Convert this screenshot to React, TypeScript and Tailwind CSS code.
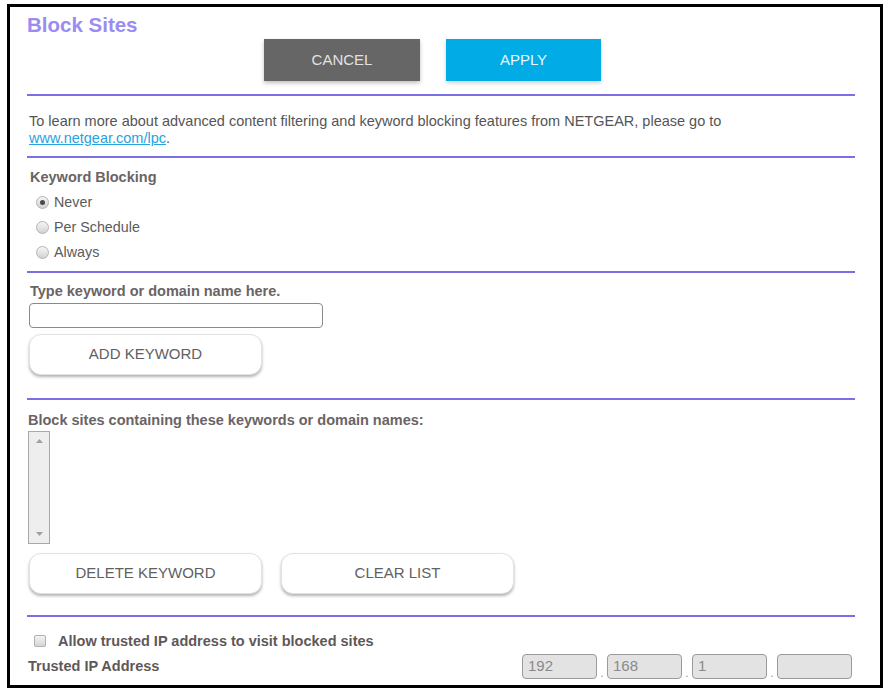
import { useState } from "react";

const LINE = "h-[2px] bg-[#7b6fe3]";

function Radio({ checked, label }: { checked?: boolean; label: string }) {
  return (
    <label className="flex h-[25px] items-center gap-[5px] pl-[9px] text-[14.3px] text-[#5b5b5b]">
      <span className="flex h-[13px] w-[13px] items-center justify-center rounded-full border border-[#b4b4b4] bg-gradient-to-b from-[#f6f6f6] to-[#d2d2d2]">
        {checked && <span className="h-[5px] w-[5px] rounded-full bg-[#4a4a4a]" />}
      </span>
      {label}
    </label>
  );
}

function PillButton({ children }: { children: string }) {
  return (
    <button className="h-[41px] w-[233px] rounded-[12px] border border-[#e2e2e2] bg-white text-[15px] text-[#616161] shadow-[0_2px_3px_rgba(0,0,0,0.3)]">
      {children}
    </button>
  );
}

function IpBox({ value }: { value: string }) {
  return (
    <div className="flex h-[25px] w-[75px] items-center rounded-[4px] border border-[#9a9a9a] bg-[#e3e3e3] pl-[5px] text-[15px] text-[#8a8a8a]">
      {value}
    </div>
  );
}

export default function App() {
  const [mode, setMode] = useState("never");

  return (
    <div className="h-[690px] w-[887px] bg-white pl-[7px] pt-[4px] font-['Liberation_Sans',Arial,sans-serif]">
      <div className="h-[684px] w-[876px] border-[3px] border-black pl-[17px] pr-[25px]">
        <h1 className="mt-[6px] text-[20.5px] leading-[24px] font-bold text-[#9a8cf2]">Block Sites</h1>

        <div className="mt-[2px] flex gap-[26px] pl-[237px]">
          <button className="h-[42px] w-[156px] bg-[#666666] text-[15px] text-[#e2e2e2] shadow-[0_2px_4px_rgba(0,0,0,0.25)]">
            CANCEL
          </button>
          <button className="h-[42px] w-[155px] bg-[#00abe6] text-[15px] text-[#e9f7fd] shadow-[0_2px_4px_rgba(0,0,0,0.2)]">
            APPLY
          </button>
        </div>

        <div className={`mt-[13px] ${LINE}`} />

        <p className="mt-[17px] pl-[2px] text-[14.5px] leading-[17px] text-[#555]">
          To learn more about advanced content filtering and keyword blocking features from NETGEAR, please go to
          <br />
          <a className="text-[#27a3dd] underline">www.netgear.com/lpc</a>.
        </p>

        <div className={`mt-[9px] ${LINE}`} />

        <div className="mt-[10px] pl-[3px] text-[14.5px] leading-[18px] font-bold text-[#6b6464]">Keyword Blocking</div>
        <div className="mt-[4px]" onClick={() => setMode(mode)}>
          <Radio checked={mode === "never"} label="Never" />
          <Radio checked={mode === "schedule"} label="Per Schedule" />
          <Radio checked={mode === "always"} label="Always" />
        </div>

        <div className={`mt-[6px] ${LINE}`} />

        <div className="mt-[9px] pl-[3px] text-[14.5px] leading-[18px] font-bold text-[#6b6464]">
          Type keyword or domain name here.
        </div>
        <input
          type="text"
          className="mt-[3px] ml-[2px] h-[25px] w-[294px] rounded-[4px] border border-[#8a8a8a] bg-white px-1 text-[14px] outline-none"
        />
        <div className="mt-[6px] pl-[2px]">
          <PillButton>ADD KEYWORD</PillButton>
        </div>

        <div className={`mt-[23px] ${LINE}`} />

        <div className="mt-[11px] pl-[1px] text-[14.5px] leading-[18px] font-bold text-[#6b6464]">
          Block sites containing these keywords or domain names:
        </div>
        <div className="mt-[2px] ml-[1px] flex h-[113px] w-[22px] flex-col items-center justify-between border border-[#a8a8a8] bg-[#eeeeee] py-[7px]">
          <svg width="7" height="4" viewBox="0 0 7 4">
            <path d="M0 4 L3.5 0 L7 4 Z" fill="#a0a0a0" />
          </svg>
          <svg width="7" height="4" viewBox="0 0 7 4">
            <path d="M0 0 L7 0 L3.5 4 Z" fill="#a0a0a0" />
          </svg>
        </div>
        <div className="mt-[9px] flex gap-[19px] pl-[2px]">
          <PillButton>DELETE KEYWORD</PillButton>
          <PillButton>CLEAR LIST</PillButton>
        </div>

        <div className={`mt-[21px] ${LINE}`} />

        <label className="mt-[15px] flex items-center gap-[12px] pl-[7px] text-[14.5px] leading-[18px] font-bold text-[#5f5858]">
          <span className="h-[12px] w-[12px] rounded-[2px] border border-[#b0b0b0] bg-gradient-to-b from-[#f4f4f4] to-[#d6d6d6]" />
          Allow trusted IP address to visit blocked sites
        </label>

        <div className="mt-[4px] flex h-[25px] items-center justify-between pl-[1px] pr-[3px]">
          <span className="text-[14.5px] font-bold text-[#5f5858]">Trusted IP Address</span>
          <div className="flex items-end gap-[2px] text-[12px] text-[#999]">
            <IpBox value="192" />
            <span className="w-[6px] text-center leading-[12px]">.</span>
            <IpBox value="168" />
            <span className="w-[6px] text-center leading-[12px]">.</span>
            <IpBox value="1" />
            <span className="w-[6px] text-center leading-[12px]">.</span>
            <IpBox value="" />
          </div>
        </div>
      </div>
    </div>
  );
}
